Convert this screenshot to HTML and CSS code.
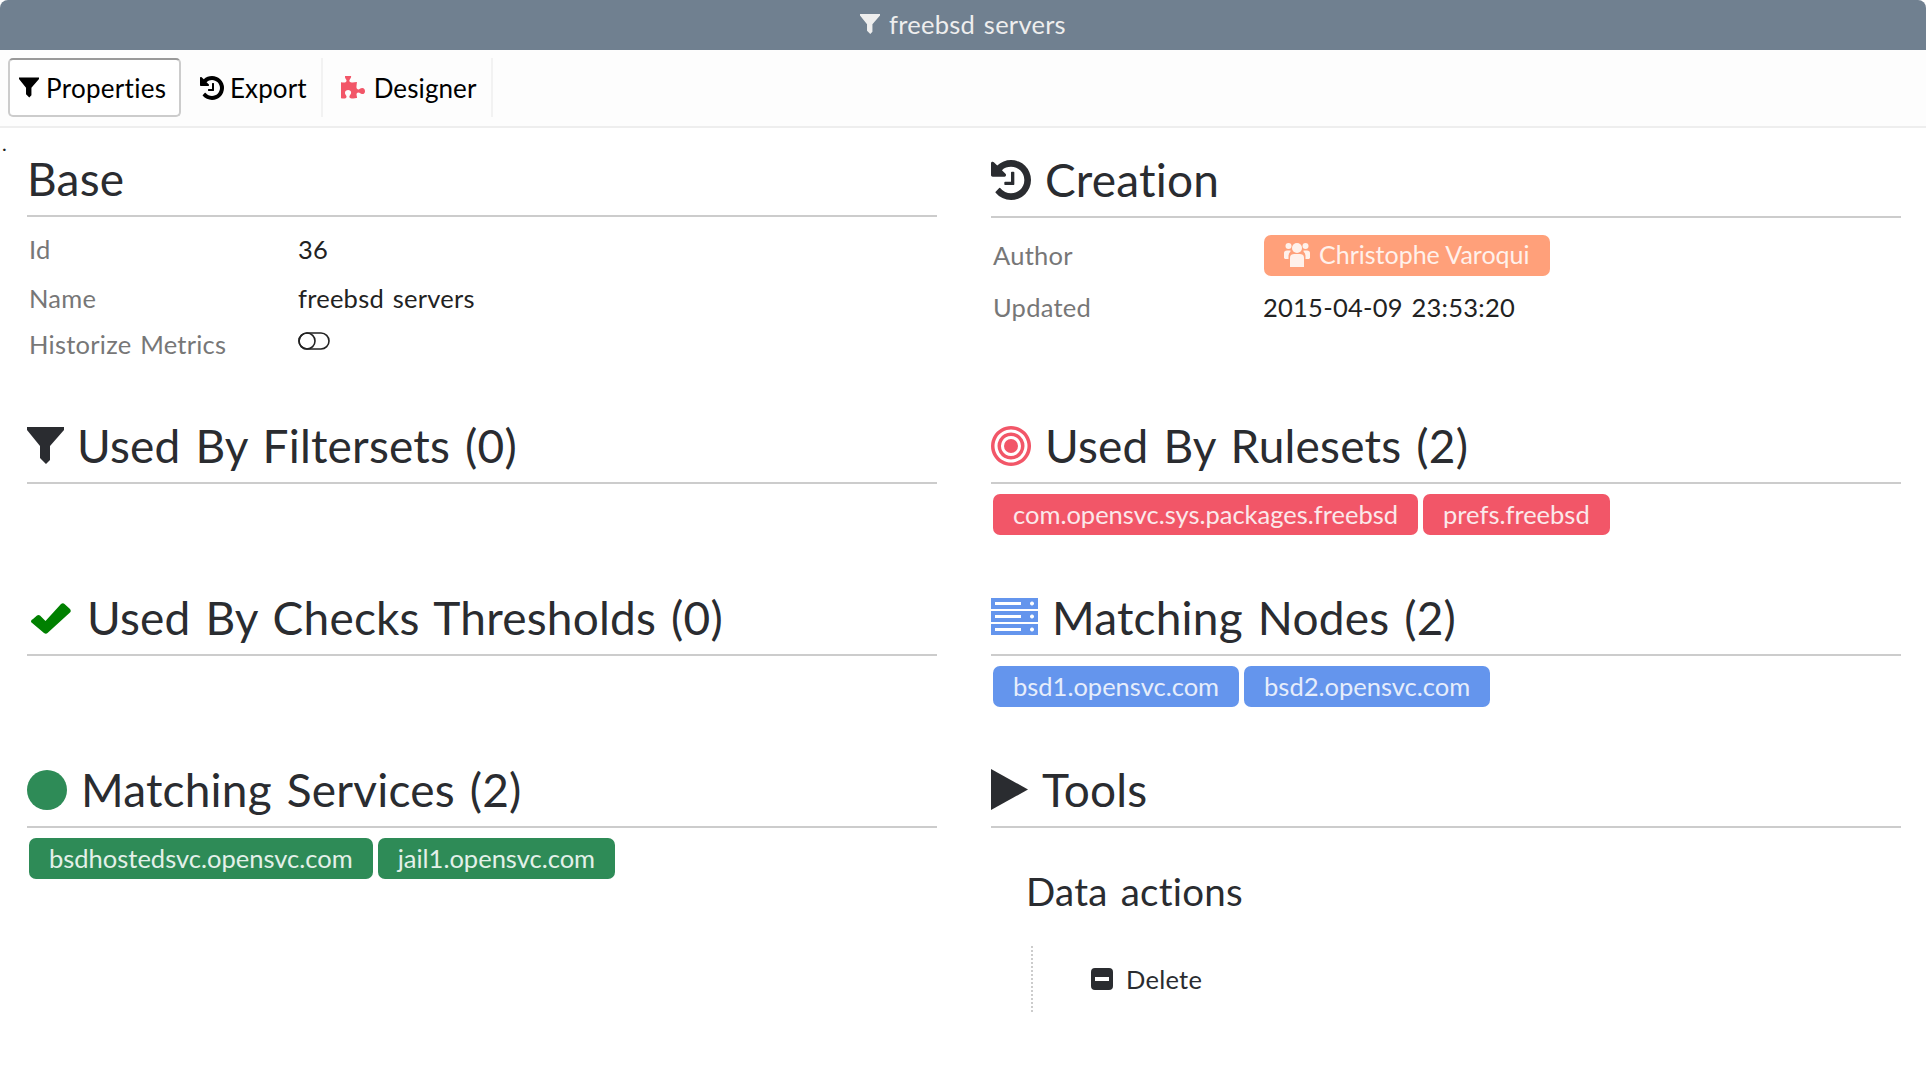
FILE: index.html
```html
<!DOCTYPE html>
<html lang="en">
<head>
<meta charset="utf-8">
<title>freebsd servers</title>
<link rel="stylesheet" href="styles.css">
</head>
<body>
<svg class="defs" width="0" height="0" aria-hidden="true">
  <symbol id="i-filter" viewBox="0 0 37 37"><path d="M0 0H37V3L23 19V33L19 37L13 31V19L0 3Z"/></symbol>
  <symbol id="i-history" viewBox="128 128 1536 1536"><path d="M1664 896q0 156-61 298t-164 245-245 164-298 61q-172 0-327-72.500t-264-204.500q-7-10-6.500-22.500t8.500-20.500l137-138q10-9 25-9 16 2 23 12 73 95 179 147t225 52q104 0 198.500-40.500t163.500-109.500 109.500-163.500 40.500-198.500-40.500-198.500-109.500-163.500-163.500-109.500-198.500-40.500q-98 0-188 35.500t-160 101.500l137 138q31 30 14 69-17 40-59 40h-448q-26 0-45-19t-19-45v-448q0-42 40-59 39-17 69 14l130 129q107-101 244.500-156.500t284.500-55.500q156 0 298 61t245 164 164 245 61 298zm-640-288v448q0 14-9 23t-23 9h-320q-14 0-23-9t-9-23v-64q0-14 9-23t23-9h224v-352q0-14 9-23t23-9h64q14 0 23 9t9 23z"/></symbol>
  <symbol id="i-puzzle" viewBox="128 128 1536 1536"><path d="M1664 1098q0 81-44.500 135t-123.500 54q-41 0-77.500-17.500t-59-38-56.500-38-71-17.500q-110 0-110 124 0 39 16 115t15 115v5q-22 0-33 1-34 3-97.500 11.500t-115.500 13.500-98 5q-61 0-103-26.500t-42-83.500q0-37 17.500-71t38-56.500 38-59 17.500-77.500q0-79-54-123.500t-135-44.500q-84 0-143 45.500t-59 127.500q0 43 15 83t33.500 64.500 33.500 53 15 50.500q0 45-46 89-37 35-117 35-95 0-245-24-9-2-27.500-4t-27.500-4l-13-2q-1 0-3-1-2 0-2-1v-1024q2 1 17.500 3.500t34 5 21.500 3.500q150 24 245 24 80 0 117-35 46-44 46-89 0-22-15-50.500t-33.500-53-33.500-64.500-15-83q0-82 59-127.500t144-45.500q80 0 134 44.500t54 123.500q0 41-17.500 77.500t-38 59-38 56.500-17.500 71q0 57 42 83.500t103 26.500q64 0 180-15t163-17v2q-1 2-3.500 17.500t-5 34-3.500 21.500q-24 150-24 245 0 80 35 117 44 46 89 46 22 0 50.500-15t53-33.500 64.500-33.500 83-15q82 0 127.500 59t45.500 143z"/></symbol>
  <symbol id="i-check" viewBox="0 0 41 32"><path d="M3 17L7 13.500Q8.500 12.500 10 13.500L15.500 19L31 2Q33 .5 34.500 2L40 7Q41.500 9 40 10.500L17.500 31Q16 32.500 14 31L1.500 20.500Q0 18.500 3 17Z"/></symbol>
  <symbol id="i-servers" viewBox="0 0 47 37"><path fill-rule="evenodd" d="M0 0H47V11H0ZM4 4V7H30V4ZM41 3.500A2 2 0 1 0 41.010 3.500ZM0 13H47V24H0ZM4 17V20H30V17ZM41 16.500A2 2 0 1 0 41.010 16.500ZM0 26H47V37H0ZM4 30V33H30V30ZM41 29.500A2 2 0 1 0 41.010 29.500Z"/></symbol>
  <symbol id="i-users" viewBox="0 0 26 26"><g><circle cx="13" cy="7" r="5"/><circle cx="4.500" cy="5" r="3"/><circle cx="21.500" cy="5" r="3"/><path d="M6 26V17Q6 13 10 13H16Q20 13 20 17V26Z"/><path d="M0 17V12Q0 9.500 3 9.500H6.500V10.500Q4.500 12 4.500 15V18H1ZM26 17V12Q26 9.500 23 9.500H19.500V10.500Q21.500 12 21.500 15V18H25Z"/></g></symbol>
</svg>

<header class="titlebar">
  <svg class="ico ico-title"><use href="#i-filter"/></svg>
  <span>freebsd servers</span>
</header>

<nav class="toolbar">
  <a class="tab tab-active"><svg class="ico ico-tab-filter"><use href="#i-filter"/></svg>Properties</a>
  <a class="tab tab-sep tab-export"><svg class="ico ico-tab"><use href="#i-history"/></svg>Export</a>
  <a class="tab tab-sep tab-designer"><svg class="ico ico-tab ico-red"><use href="#i-puzzle"/></svg>Designer</a>
</nav>

<main class="content">
  <span class="stray">.</span>

  <section class="panel">
    <h2 class="heading">Base</h2>
    <dl class="props props-base">
      <dt>Id</dt><dd>36</dd>
      <dt>Name</dt><dd>freebsd servers</dd>
      <dt>Historize Metrics</dt>
      <dd><svg class="toggle" viewBox="0 0 32 18"><rect x="1" y="1" width="30" height="16" rx="8"/><circle cx="9" cy="9" r="8"/></svg></dd>
    </dl>
  </section>

  <section class="panel panel-creation">
    <h2 class="heading"><svg class="ico ico-h"><use href="#i-history"/></svg>Creation</h2>
    <dl class="props props-creation">
      <dt>Author</dt>
      <dd><span class="badge badge-orange"><svg class="ico ico-users"><use href="#i-users"/></svg>Christophe Varoqui</span></dd>
      <dt>Updated</dt><dd>2015-04-09 23:53:20</dd>
    </dl>
  </section>

  <section class="panel">
    <h2 class="heading"><svg class="ico ico-h ico-filter"><use href="#i-filter"/></svg>Used By Filtersets (0)</h2>
  </section>

  <section class="panel">
    <h2 class="heading">
      <svg class="ico ico-h ico-red" viewBox="0 0 40 40"><path fill-rule="evenodd" d="M20 0a20 20 0 1 0 .01 0ZM20 3.500a16.500 16.500 0 1 1-.01 0Z"/><path fill-rule="evenodd" d="M20 6.500a13.500 13.500 0 1 0 .01 0ZM20 10a10 10 0 1 1-.01 0Z"/><circle cx="20" cy="20" r="7"/></svg>
      Used By Rulesets (2)</h2>
    <div class="badges">
      <span class="badge badge-red">com.opensvc.sys.packages.freebsd</span>
      <span class="badge badge-red">prefs.freebsd</span>
    </div>
  </section>

  <section class="panel">
    <h2 class="heading"><svg class="ico ico-check"><use href="#i-check"/></svg>Used By Checks Thresholds (0)</h2>
  </section>

  <section class="panel">
    <h2 class="heading"><svg class="ico ico-servers"><use href="#i-servers"/></svg>Matching Nodes (2)</h2>
    <div class="badges">
      <span class="badge badge-blue">bsd1.opensvc.com</span>
      <span class="badge badge-blue">bsd2.opensvc.com</span>
    </div>
  </section>

  <section class="panel">
    <h2 class="heading"><span class="dot"></span>Matching Services (2)</h2>
    <div class="badges">
      <span class="badge badge-green">bsdhostedsvc.opensvc.com</span>
      <span class="badge badge-green">jail1.opensvc.com</span>
    </div>
  </section>

  <section class="panel">
    <h2 class="heading"><svg class="ico ico-play" viewBox="0 0 37 41"><path d="M0 0L37 20.500L0 41Z"/></svg>Tools</h2>
    <div class="tools">
      <h3 class="tools-title">Data actions</h3>
      <ul class="tools-list">
        <li class="tools-item">
          <svg class="ico-minus" viewBox="0 0 22 22"><path fill-rule="evenodd" d="M4 0H18Q22 0 22 4V18Q22 22 18 22H4Q0 22 0 18V4Q0 0 4 0ZM4 9V13H18V9Z"/></svg>
          Delete
        </li>
      </ul>
    </div>
  </section>
</main>
</body>
</html>
```

FILE: styles.css
```css
* { box-sizing: border-box; }
html, body { margin: 0; padding: 0; background: #fff; }
body {
  font-family: "Lato", "Noto Sans", sans-serif;
  font-size: 25.5px;
  letter-spacing: .25px;
  word-spacing: 2px;
  font-variant-ligatures: none;
  color: #222;
  width: 1926px;
  height: 1090px;
  overflow: hidden;
}
.defs { position: absolute; }
.ico { fill: currentColor; flex: none; display: block; }

.titlebar {
  height: 50px;
  background: #708090;
  color: #eee;
  border-radius: 8px 8px 0 0;
  display: flex;
  align-items: center;
  justify-content: center;
  gap: 9px;
  padding-bottom: 3px;
}
.ico-title { width: 20px; height: 20px; }

.toolbar {
  height: 78px;
  background: #fdfdfd;
  border-bottom: 2px solid #eee;
  display: flex;
  align-items: stretch;
  padding: 8px 0 9px 8px;
  color: #000;
  font-size: 26px;
  letter-spacing: .1px;
}
.tab {
  display: flex;
  align-items: center;
  padding: 0 14px 0 18px;
}
.tab-export { padding-left: 19px; padding-right: 14px; }
.tab-designer { padding-left: 18px; }
.tab-export .ico-tab { margin-right: 6px; }
.tab-designer .ico-tab { margin-right: 9px; }
.tab-sep { border-right: 2px solid #f2f2f2; }
.tab-active {
  border: 2px solid #ccc;
  border-top-color: #999;
  border-radius: 5px;
  background: #fff;
  padding: 0 14px 0 9px;
  width: 173px;
  letter-spacing: .3px;
}
.ico-tab-filter { width: 20px; height: 21px; margin-right: 7px; }
.ico-tab { width: 24px; height: 24px; margin-right: 8px; }
.ico-red { color: #f25668; }

.content {
  position: relative;
  display: grid;
  grid-template-columns: 910px 910px;
  grid-template-rows: 267px 172px 172px auto;
  column-gap: 54px;
  padding: 25px 0 0 27px;
}
.stray { position: absolute; left: 2px; top: 0; font-size: 20px; line-height: 30px; }

.heading {
  margin: 0;
  height: 64px;
  border-bottom: 2px solid #ccc;
  font-size: 46px;
  font-weight: 400;
  letter-spacing: .2px;
  word-spacing: 3px;
  color: #2a2c30;
  display: flex;
  align-items: center;
  gap: 14px;
  padding-bottom: 11px;
}
.panel-creation { padding-top: 1px; }
.ico-h { width: 40px; height: 40px; }
.ico-h.ico-filter { width: 37px; height: 37px; margin-right: -1px; }
.ico-check { width: 41px; height: 32px; margin: 0 2px 0 3px; color: #008000; }
.ico-servers { width: 47px; height: 37px; margin-top: -3px; color: #6495ed; }
.ico-play { width: 37px; height: 41px; }
.dot { width: 40px; height: 40px; border-radius: 50%; background: #2e8b57; flex: none; }

.props {
  margin: 0;
  padding-left: 2px;
  display: grid;
  grid-template-columns: 269px auto;
  justify-content: start;
  align-items: center;
  line-height: 32px;
}
.props dt { color: #777; }
.props dd { margin: 0; }
.props-base { grid-auto-rows: 48px 49px 44px; padding-top: 8px; }
.props-creation { grid-template-columns: 270px auto; grid-template-rows: 53px 52px; padding-top: 10px; }

.toggle {
  display: block;
  width: 32px;
  height: 18px;
  margin-top: -6px;
  fill: none;
  stroke: #222;
  stroke-width: 1.600;
}

.badges { display: flex; gap: 5px; padding: 10px 0 0 2px; }
.badge {
  display: inline-flex;
  align-items: center;
  height: 41px;
  padding: 0 20px 2px;
  border-radius: 7px;
  font-size: 25.5px;
  letter-spacing: 0;
  word-spacing: 0;
}
.badge-red { background: #f25668; color: #fbe8ea; }
.badge-blue { background: #6495ed; color: #e6edfb; }
.badge-green { background: #2e8b57; color: #e3f0e9; }
.badge-orange { background: #ffa07a; color: #fff1eb; margin: 1px 0 0 1px; font-size: 25px; }
.ico-users { width: 26px; height: 26px; margin-right: 9px; }

.tools { padding: 38px 0 0 35px; }
.tools-title { margin: 0; font-size: 38.5px; font-weight: 400; line-height: 50px; color: #2a2c30; word-spacing: 3px; }
.tools-list {
  list-style: none;
  margin: 30px 0 0 5px;
  padding: 21px 0;
  height: 66px;
  border-left: 2px dotted #ccc;
}
.tools-item { display: flex; align-items: center; gap: 13px; margin-left: 58px; height: 24px; color: #2a2c30; word-spacing: 0; }
.ico-minus { width: 22px; height: 22px; fill: #2a2c30; flex: none; }
```
